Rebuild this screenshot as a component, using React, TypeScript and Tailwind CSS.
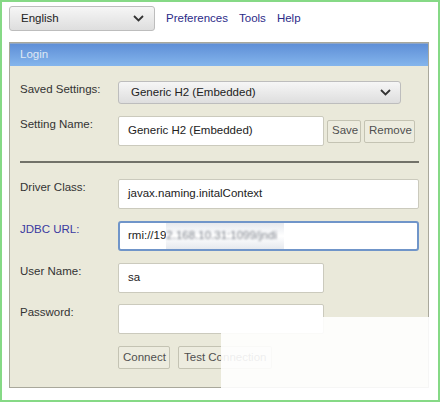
import type { ReactNode } from 'react'

function Chevron() {
  return (
    <svg width="11" height="7" viewBox="0 0 11 7" className="shrink-0">
      <polyline points="1,1 5.5,5.5 10,1" fill="none" stroke="#333" strokeWidth="1.8" />
    </svg>
  )
}

function Label({ children, blue }: { children: ReactNode; blue?: boolean }) {
  return (
    <div
      className={
        'w-[98px] shrink-0 leading-[16px] ' + (blue ? 'text-[#3a3aa0]' : 'text-[#333]')
      }
    >
      {children}
    </div>
  )
}

function Btn({ children, className = '' }: { children: ReactNode; className?: string }) {
  return (
    <button
      className={
        'h-[23px] rounded-[2px] border border-[#c4c3b3] bg-[#edecdf] px-[4px] text-[11.5px] text-[#505050] ' +
        className
      }
    >
      {children}
    </button>
  )
}

export default function App() {
  return (
    <div
      className="relative h-[402px] w-[440px] overflow-hidden border-2 border-[#86d986] bg-white text-[11.5px]"
      style={{ fontFamily: '"Liberation Sans", Arial, sans-serif' }}
    >
      <div className="px-[7px] pt-[4px]">
        {/* Top bar */}
        <div className="flex items-center">
          <div className="flex h-[25px] w-[146px] items-center justify-between rounded-[3px] border border-[#bdbdbd] bg-gradient-to-b from-[#f6f6f6] to-[#dedede] pl-[11px] pr-[10px] text-[#222]">
            <span>English</span>
            <Chevron />
          </div>
          <div className="ml-[11px] flex gap-[11px] text-[#2b2b88]">
            <span>Preferences</span>
            <span>Tools</span>
            <span>Help</span>
          </div>
        </div>

        {/* Login panel */}
        <div className="mt-[11px] h-[346px] w-[420px] border border-[#a9a89b] bg-[#eae9da]">
          <div className="flex h-[23px] items-center border-t border-[#8fa6c6] bg-gradient-to-b from-[#5f8fd7] to-[#84b5ec] pl-[10px] text-[#dfe8f4]">
            Login
          </div>

          <div className="pl-[10px] pr-[9px] pt-[15px]">
            <div className="flex">
              <Label>Saved Settings:</Label>
              <div className="flex h-[23px] w-[283px] items-center justify-between rounded-[3px] border border-[#bdbdbd] bg-gradient-to-b from-[#f6f6f6] to-[#dedede] pl-[12px] pr-[9px] text-[#222]">
                <span>Generic H2 (Embedded)</span>
                <Chevron />
              </div>
            </div>

            <div className="mt-[12px] flex">
              <Label>Setting Name:</Label>
              <div className="flex items-center">
                <div className="flex h-[30px] w-[206px] items-center rounded-[2px] border border-[#cbcabd] bg-white pl-[9px] text-[#222]">
                  Generic H2 (Embedded)
                </div>
                <Btn className="ml-[3px] w-[34px]">Save</Btn>
                <Btn className="ml-[3px] w-[51px]">Remove</Btn>
              </div>
            </div>

            <div className="mt-[15px] h-[2px] bg-[#727269]" />

            <div className="mt-[16px] flex">
              <Label>Driver Class:</Label>
              <div className="flex h-[30px] flex-1 items-center rounded-[2px] border border-[#cbcabd] bg-white pl-[9px] text-[#222]">
                javax.naming.initalContext
              </div>
            </div>

            <div className="mt-[12px] flex">
              <Label blue>JDBC URL:</Label>
              <div className="flex h-[30px] flex-1 items-center rounded-[3px] border-2 border-[#7095c9] bg-white pl-[8px] text-[#222]">
                <span>rmi://19</span>
                <span className="flex h-[26px] w-[118px] items-center bg-gradient-to-b from-[#e6e9ee] via-white to-[#e6e9ee]">
                  <span className="text-[#7c818a] blur-[1px]">2.168.10.31:1099/jndi</span>
                </span>
              </div>
            </div>

            <div className="mt-[12px] flex">
              <Label>User Name:</Label>
              <div className="flex h-[30px] w-[206px] items-center rounded-[2px] border border-[#cbcabd] bg-white pl-[9px] text-[#222]">
                sa
              </div>
            </div>

            <div className="mt-[11px] flex">
              <Label>Password:</Label>
              <div className="h-[30px] w-[206px] rounded-[2px] border border-[#cbcabd] bg-white" />
            </div>

            <div className="mt-[12px] flex">
              <div className="w-[98px] shrink-0" />
              <Btn className="w-[52px]">Connect</Btn>
              <Btn className="ml-[8px] px-[5px]">Test Connection</Btn>
            </div>
          </div>
        </div>
      </div>

      {/* Semi-opaque white patch over the lower right corner */}
      <div className="absolute -bottom-[2px] -right-[2px] left-[219px] top-[315px] bg-white/90" />
    </div>
  )
}
